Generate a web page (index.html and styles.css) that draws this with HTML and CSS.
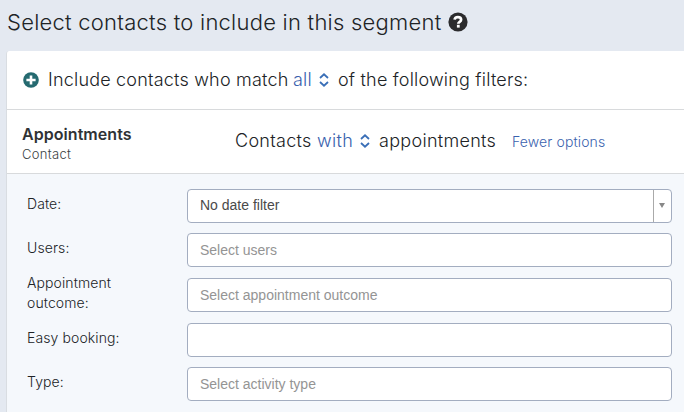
FILE: index.html
```
<!DOCTYPE html>
<html lang="en">
<head>
    <meta charset="UTF-8">
    <meta name="viewport" content="width=device-width, initial-scale=1.0">
    <title>Segment contacts</title>
    <link rel="stylesheet" href="styles.css">
</head>
<body>
    <h1 class="title">
        <span>Select contacts to include in this segment</span>
        <svg class="help" viewBox="0 0 20 20">
            <circle cx="10" cy="10" r="9.6" fill="#2b2b2d"/>
            <path d="M6.6 7.7C6.8 5.9 8.1 5.1 9.9 5.1c1.9 0 3.2 1 3.2 2.6 0 2.2-2.8 2-2.8 4" fill="none" stroke="#fff" stroke-width="2.7"/>
            <rect x="8.9" y="12.8" width="2.8" height="2.8" fill="#fff"/>
        </svg>
    </h1>

    <main class="panel">
        <div class="match">
            <svg class="add" viewBox="0 0 16 16">
                <circle cx="8" cy="8" r="7.8" fill="#256a70"/>
                <path d="M8 3.4v9.2M3.4 8h9.2" stroke="#fff" stroke-width="2.6"/>
            </svg>
            <span class="match-start">Include contacts who match</span>
            <a class="link match-all">all</a>
            <svg class="sort" viewBox="0 0 10 14"><path d="M1 5l4-3.7L9 5M1 9l4 3.7L9 9" fill="none" stroke="#3a6fb7" stroke-width="1.8"/></svg>
            <span class="match-end">of the following filters:</span>
        </div>

        <div class="filter">
            <div class="filter-name">
                <h2>Appointments</h2>
                <p>Contact</p>
            </div>
            <div class="filter-rule">
                <span class="rule-start">Contacts</span>
                <a class="link rule-with">with</a>
                <svg class="sort" viewBox="0 0 10 14"><path d="M1 5l4-3.7L9 5M1 9l4 3.7L9 9" fill="none" stroke="#3a6fb7" stroke-width="1.8"/></svg>
                <span class="rule-end">appointments</span>
                <a class="link fewer">Fewer options</a>
            </div>
        </div>

        <form class="options">
            <div class="row">
                <label for="date"><span>Date:</span></label>
                <div class="field select" id="date">
                    <span>No date filter</span>
                    <div class="arrow"><svg viewBox="0 0 6 5"><path d="M0 0h6L3 5z" fill="#888"/></svg></div>
                </div>
            </div>
            <div class="row">
                <label for="users"><span>Users:</span></label>
                <input class="field" id="users" type="text" placeholder="Select users">
            </div>
            <div class="row">
                <label for="outcome"><span class="outcome-label">Appointment outcome:</span></label>
                <input class="field" id="outcome" type="text" placeholder="Select appointment outcome">
            </div>
            <div class="row">
                <label for="booking"><span>Easy booking:</span></label>
                <input class="field" id="booking" type="text">
            </div>
            <div class="row">
                <label for="type"><span>Type:</span></label>
                <input class="field" id="type" type="text" placeholder="Select activity type">
            </div>
        </form>
    </main>
</body>
</html>
```

FILE: styles.css
```
* {
    box-sizing: border-box;
}
body {
    font-family: Inter, sans-serif;
    font-weight: 300;
    letter-spacing: 0.2px;
    margin: 0;
    height: 412px;
    overflow: hidden;
    display: flex;
    flex-direction: column;
    background-color: #e4e9f1;
    color: #202326;
    white-space: nowrap;
}
h1, h2, p {
    margin: 0;
}
.title {
    display: flex;
    align-items: center;
    height: 51px;
    padding: 0 0 7px 7px;
    font-size: 22px;
    font-weight: 300;
    letter-spacing: 0.24px;
}
.title span {
    width: 441px;
}
.help {
    width: 20px;
    height: 20px;
}
.panel {
    flex: 1;
    display: flex;
    flex-direction: column;
    margin-left: 6px;
    border-left: 1px solid #d9dde2;
    border-top-left-radius: 3px;
    background-color: #fff;
}
.link {
    color: #3a62ae;
}
.sort {
    width: 10px;
    height: 14px;
    flex: none;
}
.match {
    display: flex;
    align-items: center;
    height: 59px;
    padding: 0 0 1px 16px;
    border-bottom: 1px solid #d8dadc;
    font-size: 18px;
}
.add {
    width: 16px;
    height: 16px;
    margin-right: 9px;
}
.match-start {
    width: 245px;
}
.match-all {
    width: 26px;
}
.match-end {
    margin-left: 9px;
}
.filter {
    display: flex;
    height: 64px;
    padding-left: 15px;
    border-bottom: 1px solid #d8dadc;
}
.filter-name {
    width: 213px;
    padding-top: 14px;
}
.filter-name h2 {
    font-size: 16px;
    line-height: 20px;
    font-weight: 600;
    letter-spacing: 0.05px;
    color: #2f3235;
}
.filter-name p {
    font-size: 13px;
    line-height: 20px;
    color: #3a3f43;
    letter-spacing: 0.3px;
}
.filter-rule {
    display: flex;
    align-items: center;
    padding-bottom: 2px;
    font-size: 18px;
    letter-spacing: 0.3px;
}
.rule-start {
    width: 82px;
}
.rule-with {
    width: 43px;
}
.rule-end {
    margin-left: 9px;
    width: 133px;
}
.fewer {
    padding-top: 2px;
    font-size: 14px;
    letter-spacing: 0.12px;
}
.options {
    flex: 1;
    padding: 14.9px 0 0 20px;
    background-color: #f5f8fc;
}
.row {
    display: flex;
    height: 44.55px;
}
label {
    display: flex;
    align-items: center;
    width: 160px;
    height: 30px;
    font-size: 14px;
    line-height: 20px;
    letter-spacing: 0.1px;
}
.outcome-label {
    width: 100px;
    white-space: normal;
}
.field {
    width: 485px;
    height: 34px;
    padding: 0 12px;
    border: 1px solid #a3adc0;
    border-radius: 4px;
    background-color: #fff;
    font-family: "Liberation Sans", Arial, sans-serif;
    font-size: 14px;
    font-weight: 400;
    letter-spacing: 0;
    color: #4a4a4a;
}
.field::placeholder {
    color: #949494;
}
.select {
    display: flex;
    align-items: center;
    justify-content: space-between;
    padding: 0 0 0 12px;
}
.select span {
    padding-bottom: 2px;
}
.arrow {
    display: flex;
    align-items: center;
    justify-content: center;
    width: 18px;
    height: 32px;
    padding-right: 1px;
    border-left: 1px solid #aaa;
}
.arrow svg {
    width: 6px;
    height: 5px;
}
```
